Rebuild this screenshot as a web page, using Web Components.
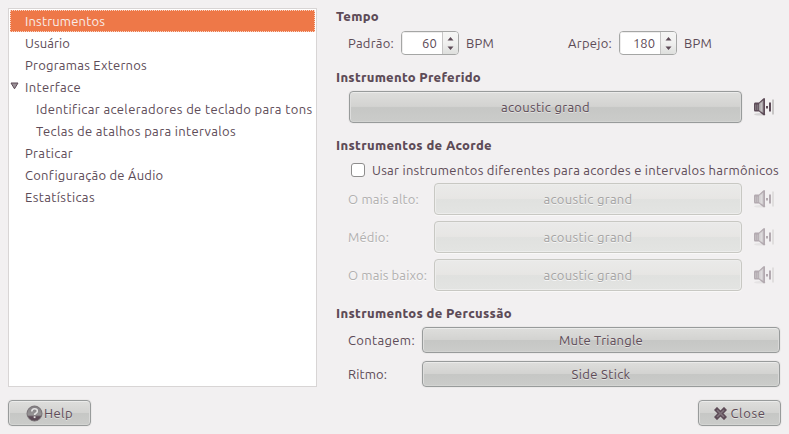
<!DOCTYPE html>
<html lang="pt-BR">
<head>
<meta charset="utf-8">
<title>Preferências</title>
<style>
html,body{margin:0;height:100%;overflow:hidden;background:#f2f0f1}
body{font:13px/22px Ubuntu,"Noto Sans","Open Sans",sans-serif;color:#5d4b57}
</style>
</head>
<body>
<pref-window></pref-window>
<script>
const define = (name, html, setup) => customElements.define(name, class extends HTMLElement {
  constructor() {
    super();
    const t = document.createElement('template');
    t.innerHTML = html;
    this.attachShadow({mode: 'open'}).append(t.content.cloneNode(true));
  }
  connectedCallback() { if (setup) setup(this, this.shadowRoot); }
});

/* Text label whose tracking is adjusted to fill the width given in "w". */
define('fit-text', `<style>
:host{display:inline-block;white-space:pre;flex:none}
span{display:inline-block}
</style><span><slot></slot></span>`, (el, root) => {
  const span = root.querySelector('span'), w = +el.getAttribute('w');
  const n = el.textContent.length;
  span.style.letterSpacing = '0px';
  const natural = span.getBoundingClientRect().width;
  const gap = (w - natural) / n;
  span.style.letterSpacing = gap + 'px';
  el.style.width = w + 'px';
});

define('tree-row', `<style>
:host{display:flex;height:22px;align-items:center;padding-left:15px;box-sizing:border-box;position:relative}
:host([child]){padding-left:26px}
:host([selected]){background:#ee7848;color:#f8ece8;outline:1px dotted #f9d5c6;outline-offset:-1px}
svg{position:absolute;left:0;top:6px;display:none}
:host([open]) svg{display:block}
</style><svg width="9" height="8"><path d="M1 1H8L4.5 6.8Z" fill="#9a9197" stroke="#5d4b57"/></svg><slot></slot>`);

define('tree-list', `<style>
:host{display:block;box-sizing:border-box;width:309px;height:379px;border:1px solid #d8d5d5;padding:1px;background:#fff}
</style><slot></slot>`);

define('push-button', `<style>
:host{display:flex;align-items:center;justify-content:center;box-sizing:border-box;height:26px;border:1px solid #989b9b;border-radius:4px;
background:linear-gradient(#dededc,#d3d3d1 48%,#c6c7c5 52%,#cbccca);box-shadow:inset 0 1px #ebebea,inset 1px 0 #dededd,inset -1px 0 #d9d9d8,inset 0 -1px #d3d4d2,0 0 0 1px #ebe9e9;text-shadow:0 1px #e4e4e2}
:host([tall]){height:32px}
:host([disabled]){color:#a4a3a3;border-color:#c8c8c3;background:linear-gradient(#eaeae9,#e7e6e4 48%,#e0e1df 52%,#e3e4e2);box-shadow:inset 0 0 0 1px #ededec,0 1px #f9f8f8;text-shadow:0 1px #f7f7f7}
</style><slot></slot>`);

define('spin-box', `<style>
:host{display:flex;box-sizing:border-box;width:58px;height:24px;border:1px solid #a5a6a5;border-radius:4px;background:#fff;overflow:hidden;flex:none}
.v{width:41px;box-sizing:border-box;padding-right:5px;text-align:right;border-right:1px solid #c6c5c5;box-shadow:inset 1px 1px #eeeded}
.s{flex:1;background:linear-gradient(#f6f6f5,#f0f0ef 50%,#dedfdd)}
svg{display:block}
</style><div class="v"><slot></slot></div><div class="s"><svg width="15" height="22"><path d="M4.5 8.5H10.5L7.5 5ZM4.5 14.5H10.5L7.5 18Z" fill="#5d4b57"/></svg></div>`);

define('check-box', `<style>
:host{display:block;box-sizing:border-box;width:14px;height:14px;border:1px solid #8e8d8d;border-radius:3px;background:#fff;flex:none}
</style>`);

define('group-title', `<style>
:host{display:block;height:22px;font-weight:800;font-size:13px}
</style><slot></slot>`);

define('speaker-icon', `<style>
:host{display:block;width:22px;height:20px;flex:none}
:host([disabled]){opacity:.42}
svg{display:block}
</style><svg width="22" height="20">
<ellipse cx="7" cy="17.3" rx="6" ry="1.2" fill="#d5d3d4"/>
<path d="M2 5.5H6L10.5 1.2H12V18.2H10.5L6 14.5H2Q1 14.5 1 13V7Q1 5.5 2 5.5Z" fill="#5d4b57"/>
<path d="M6 6.8L10.3 3.2V16L6 13.2Z" fill="#aaa5a8"/>
<path d="M8.2 5.8V14.5" stroke="#d0cdce"/><path d="M2.8 7.5V13M4.8 7.5V13" stroke="#8e868b"/>
<path d="M13 9h2v2.4h-2z" fill="#5d4b57"/><path d="M16 5.5h2v9h-2z" fill="#5d4b57"/><path d="M19 2.5h2v15h-2z" fill="#c8c6c6"/></svg>`);

define('help-icon', `<style>:host{display:block;width:17px;height:17px;flex:none}svg{display:block}</style>
<svg width="17" height="17"><defs><linearGradient id="g" x2="0" y2="1"><stop offset=".1" stop-color="#858285"/><stop offset=".6" stop-color="#979596"/><stop offset=".72" stop-color="#5d4b57"/></linearGradient></defs>
<circle cx="8.5" cy="8.5" r="7.5" fill="url(#g)" stroke="#777175"/>
<path d="M5.8 6.5Q5.8 3.8 8.6 3.8T11.3 6.2Q11.3 7.5 9.8 8.3Q8.6 8.9 8.6 10" fill="none" stroke="#e4e3e3" stroke-width="1.6"/><path d="M7.7 11.3h1.8v1.8h-1.8z" fill="#e4e3e3"/></svg>`);

define('close-icon', `<style>:host{display:block;width:13px;height:13px;flex:none}svg{display:block}</style>
<svg width="13" height="13"><path d="M3 3L10 10M10 3L3 10" stroke="#5d4b57" stroke-width="4.4" stroke-linecap="square"/><path d="M3 3L10 10M10 3L3 10" stroke="#81747c" stroke-width="1.5"/></svg>`);

define('pref-window', `<style>
:host{display:flex;flex-direction:column;justify-content:space-between;box-sizing:border-box;width:789px;height:434px;padding:8px 8px 8px;background:#f2f0f1}
.main{display:flex;gap:19px}
.panel{width:445px;margin-top:-3px}
.row{display:flex;align-items:center;box-sizing:border-box;padding-left:12px}
.tempo{height:24px;margin:4px 0 11px}
.tempo spin-box{margin:0 7px 0 7px}
.tempo .arp{margin-left:74px}
.pref{padding-left:13px;gap:11px;margin:3px 0 11px;height:32px}
.pref push-button{width:393px}
.check{height:22px;padding-left:15px;gap:7px;margin:3px 0 2px}
.grid{display:grid;grid-template-columns:86px 308px 33px;row-gap:6px;align-items:center;padding-left:12px}
.grid speaker-icon{margin-left:11px}
.dim{color:#b1afaf;text-shadow:0 1px #fbfbfb}
.perc{display:grid;grid-template-columns:74px 358px;row-gap:8px;align-items:center;padding-left:12px;margin-top:3px}
.last{margin-top:11px}
.foot{display:flex;justify-content:space-between}
.foot push-button{width:83px}
.foot .help{gap:1px}
.foot .close{gap:4px}
</style>
<div class="main">
<tree-list>
<tree-row selected><fit-text w="80">Instrumentos</fit-text></tree-row>
<tree-row><fit-text w="45">Usuário</fit-text></tree-row>
<tree-row><fit-text w="122">Programas Externos</fit-text></tree-row>
<tree-row open><fit-text w="56">Interface</fit-text></tree-row>
<tree-row child><fit-text w="276">Identificar aceleradores de teclado para tons</fit-text></tree-row>
<tree-row child><fit-text w="200">Teclas de atalhos para intervalos</fit-text></tree-row>
<tree-row><fit-text w="48">Praticar</fit-text></tree-row>
<tree-row><fit-text w="138">Configuração de Áudio</fit-text></tree-row>
<tree-row><fit-text w="70">Estatísticas</fit-text></tree-row>
</tree-list>
<div class="panel">
<group-title><fit-text w="43">Tempo</fit-text></group-title>
<div class="row tempo"><fit-text w="46">Padrão:</fit-text><spin-box><fit-text w="15">60</fit-text></spin-box><fit-text w="28">BPM</fit-text><fit-text class="arp" w="44">Arpejo:</fit-text><spin-box><fit-text w="22">180</fit-text></spin-box><fit-text w="28">BPM</fit-text></div>
<group-title><fit-text w="145">Instrumento Preferido</fit-text></group-title>
<div class="row pref"><push-button tall><fit-text w="89">acoustic grand</fit-text></push-button><speaker-icon></speaker-icon></div>
<group-title><fit-text w="156">Instrumentos de Acorde</fit-text></group-title>
<div class="row check"><check-box></check-box><fit-text w="407">Usar instrumentos diferentes para acordes e intervalos harmônicos</fit-text></div>
<div class="grid">
<fit-text class="dim" w="71">O mais alto:</fit-text><push-button tall disabled><fit-text w="89">acoustic grand</fit-text></push-button><speaker-icon disabled></speaker-icon>
<fit-text class="dim" w="41">Médio:</fit-text><push-button tall disabled><fit-text w="89">acoustic grand</fit-text></push-button><speaker-icon disabled></speaker-icon>
<fit-text class="dim" w="79">O mais baixo:</fit-text><push-button tall disabled><fit-text w="89">acoustic grand</fit-text></push-button><speaker-icon disabled></speaker-icon>
</div>
<group-title class="last"><fit-text w="176">Instrumentos de Percussão</fit-text></group-title>
<div class="perc">
<fit-text w="67">Contagem:</fit-text><push-button><fit-text w="84">Mute Triangle</fit-text></push-button>
<fit-text w="39">Ritmo:</fit-text><push-button><fit-text w="59">Side Stick</fit-text></push-button>
</div>
</div>
</div>
<div class="foot"><push-button class="help"><help-icon></help-icon><fit-text w="29">Help</fit-text></push-button><push-button class="close"><close-icon></close-icon><fit-text w="35">Close</fit-text></push-button></div>`);
</script>
</body>
</html>
